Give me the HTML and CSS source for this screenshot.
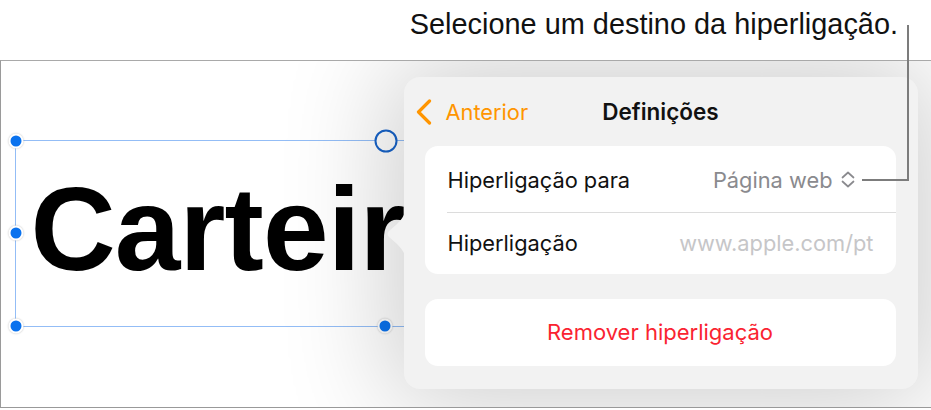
FILE: index.html
```html
<!DOCTYPE html>
<html lang="pt">
<head>
<meta charset="utf-8">
<title>Hiperligação</title>
<link rel="stylesheet" href="styles.css">
</head>
<body>
<div class="page">
  <header class="caption">
    <span class="caption-text">Selecione um destino da hiperligação.</span>
  </header>

  <div class="canvas">
    <div class="textbox">
      <div class="word">Carteir</div>
      <span class="handle h-tl"></span>
      <span class="handle h-ml"></span>
      <span class="handle h-bl"></span>
      <span class="handle h-bm"></span>
      <span class="ring h-tm"></span>
    </div>

    <div class="popover">
      <svg class="pop-arrow" width="20" height="58" viewBox="0 0 20 58" aria-hidden="true">
        <path d="M20 0 C20 9 16 14 11 19 L3 26 Q0 29 3 32 L11 39 C16 44 20 49 20 58 Z" fill="#f2f2f2"/>
      </svg>

      <nav class="nav">
        <div class="back">
          <svg class="back-chev" width="18" height="26" viewBox="0 0 18 26" aria-hidden="true">
            <polyline points="14.5,2 3.5,13 14.5,24" fill="none" stroke="#ff9500" stroke-width="3.2" stroke-linecap="round" stroke-linejoin="round"/>
          </svg>
          <span class="back-label">Anterior</span>
        </div>
        <div class="title">Definições</div>
        <div class="nav-spacer"></div>
      </nav>

      <section class="group">
        <div class="row row-first">
          <span class="label">Hiperligação para</span>
          <span class="value">Página web
            <svg class="updown" width="14" height="17" viewBox="0 0 14 17" aria-hidden="true">
              <polyline points="1.5,6.5 7,1.5 12.5,6.5" fill="none" stroke="#8a8a8e" stroke-width="1.7" stroke-linecap="round" stroke-linejoin="round"/>
              <polyline points="1.5,10.5 7,15.5 12.5,10.5" fill="none" stroke="#8a8a8e" stroke-width="1.7" stroke-linecap="round" stroke-linejoin="round"/>
            </svg>
          </span>
        </div>
        <div class="sep"></div>
        <div class="row row-second">
          <span class="label">Hiperligação</span>
          <span class="placeholder">www.apple.com/pt</span>
        </div>
      </section>

      <section class="group group-action">
        <span class="danger">Remover hiperligação</span>
      </section>
    </div>
  </div>

  <div class="leader" aria-hidden="true"></div>
</div>
</body>
</html>
```

FILE: styles.css
```css
* { box-sizing: border-box; }

html, body {
  margin: 0;
  padding: 0;
  background: #ffffff;
}

body {
  width: 931px;
  height: 410px;
  overflow: hidden;
  font-family: Inter, "Noto Sans", sans-serif;
}

.page {
  position: relative;
  width: 931px;
  height: 410px;
}

/* caption above the screen */
.caption {
  height: 60px;
  display: flex;
  justify-content: flex-end;
  padding: 7px 33px 0 0;
}

.caption-text {
  font-family: "Liberation Sans", Arial, sans-serif;
  font-size: 28.9px;
  line-height: 34px;
  color: #111111;
}

/* callout leader line */
.leader {
  position: absolute;
  left: 862px;
  top: 25px;
  width: 47px;
  height: 156px;
  border-right: 2px solid #7c7c7c;
  border-bottom: 2px solid #7c7c7c;
}

/* the screen */
.canvas {
  position: relative;
  height: 348px;
  border-top: 1px solid #a9a9a9;
  border-left: 1.5px solid #9a9a9a;
  border-bottom: 1.5px solid #999999;
  overflow: hidden;
  background: #ffffff;
}

/* selected text object (item on a free canvas) */
.textbox {
  position: absolute;
  left: 13.5px;
  top: 78.5px;
  width: 760px;
  height: 187px;
  border: 1.5px solid #93bdf6;
  padding: 29px 0 0 15px;
}

.word {
  width: max-content;
  font-family: "Liberation Sans", Arial, sans-serif;
  font-weight: 700;
  font-size: 118px;
  line-height: 118px;
  letter-spacing: -0.9px;
  color: #000000;
  white-space: nowrap;
}

.handle {
  position: absolute;
  width: 15px;
  height: 15px;
  border-radius: 50%;
  background: #0a72ee;
  border: 2.5px solid #ffffff;
  box-shadow: 0 0 2px rgba(0, 0, 0, 0.25);
  transform: translate(-50%, -50%);
}

.ring {
  position: absolute;
  width: 23px;
  height: 23px;
  border-radius: 50%;
  background: #ffffff;
  border: 2px solid #1763c9;
  transform: translate(-50%, -50%);
}

.h-tl { left: 0; top: 0; }
.h-ml { left: 0; top: 50%; }
.h-bl { left: 0; top: 100%; }
.h-bm { left: 369px; top: 100%; }
.h-tm { left: 370px; top: 0; }

/* popover */
.popover {
  position: absolute;
  left: 402.5px;
  top: 16px;
  width: 514px;
  height: 312px;
  background: #f2f2f2;
  border-radius: 16px;
  padding: 0 22px 23px 21px;
  box-shadow: 0 0 110px 14px rgba(0, 0, 0, 0.2);
  display: flex;
  flex-direction: column;
}

.pop-arrow {
  position: absolute;
  left: -18px;
  top: 128px;
}

.nav {
  height: 69px;
  margin: 0 -22px 0 -21px;
  display: grid;
  grid-template-columns: 1fr auto 1fr;
  align-items: center;
  padding-top: 1px;
}

.back {
  display: flex;
  align-items: center;
  padding-left: 11px;
  gap: 13px;
}

.back-chev { display: block; }

.back-label {
  font-size: 21.8px;
  color: #ff9500;
}

.title {
  font-size: 22.5px;
  font-weight: 600;
  color: #111111;
}

.group {
  background: #ffffff;
  border-radius: 13px;
}

.row {
  display: flex;
  align-items: center;
  justify-content: space-between;
  padding: 0 22px 0 23px;
  font-size: 21.8px;
}

.row-first { height: 66px; padding-top: 2px; }
.row-second { height: 61px; }

.label { color: #111111; }

.value {
  display: flex;
  align-items: center;
  gap: 8px;
  color: #8a8a8e;
  margin-right: 19px;
}

.updown { display: block; }

.placeholder { color: #c6c6c8; }

.sep {
  height: 1px;
  margin-left: 22px;
  background: #dcdcdc;
}

.group-action {
  margin-top: 25px;
  height: 68px;
  display: flex;
  align-items: center;
  justify-content: center;
}

.danger {
  font-size: 22px;
  color: #fa2331;
}
```
